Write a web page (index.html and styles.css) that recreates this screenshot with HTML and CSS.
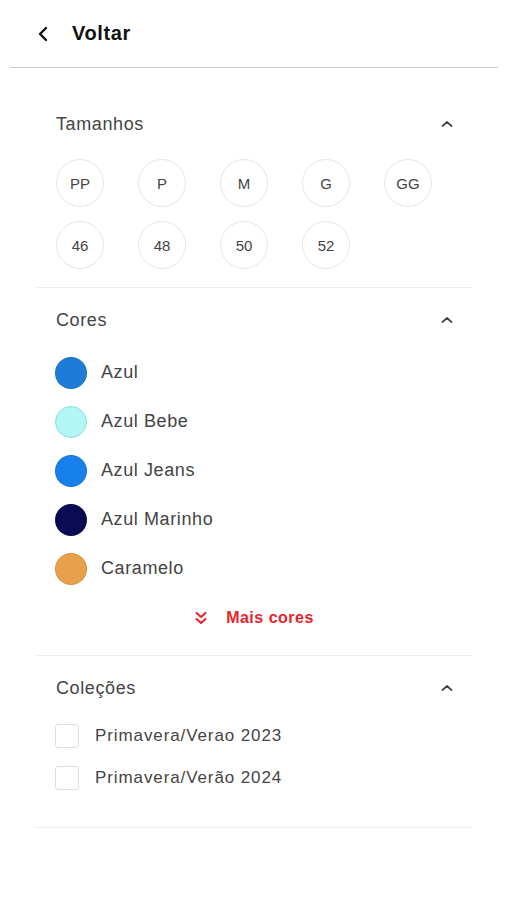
FILE: index.html
```html
<!DOCTYPE html>
<html lang="pt">
<head>
<meta charset="utf-8">
<title>Filtros</title>
<link rel="stylesheet" href="styles.css">
</head>
<body>
<header class="topbar">
  <svg class="back" width="12" height="16" viewBox="0 0 12 16"><path d="M9 2 L3 8 L9 14" fill="none" stroke="#111" stroke-width="2.4" stroke-linecap="round" stroke-linejoin="round"/></svg>
  <span class="topbar-title">Voltar</span>
</header>
<main class="filters">
  <section class="group">
    <div class="group-head">
      <span class="group-title">Tamanhos</span>
      <svg class="chev" width="14" height="8" viewBox="0 0 14 8"><path d="M2.5 6 L7 2 L11.5 6" fill="none" stroke="#444" stroke-width="1.7" stroke-linecap="round" stroke-linejoin="round"/></svg>
    </div>
    <div class="sizes">
      <span class="size">PP</span>
      <span class="size">P</span>
      <span class="size">M</span>
      <span class="size">G</span>
      <span class="size">GG</span>
      <span class="size">46</span>
      <span class="size">48</span>
      <span class="size">50</span>
      <span class="size">52</span>
    </div>
  </section>
  <section class="group">
    <div class="group-head">
      <span class="group-title">Cores</span>
      <svg class="chev" width="14" height="8" viewBox="0 0 14 8"><path d="M2.5 6 L7 2 L11.5 6" fill="none" stroke="#444" stroke-width="1.7" stroke-linecap="round" stroke-linejoin="round"/></svg>
    </div>
    <ul class="colors">
      <li class="color"><span class="swatch" style="background:#1f7bd8"></span>Azul</li>
      <li class="color"><span class="swatch light" style="background:#b2f6f6"></span>Azul Bebe</li>
      <li class="color"><span class="swatch" style="background:#1880ea"></span>Azul Jeans</li>
      <li class="color"><span class="swatch" style="background:#0a0b52"></span>Azul Marinho</li>
      <li class="color"><span class="swatch" style="background:#e9a04a"></span>Caramelo</li>
    </ul>
    <div class="more">
      <svg class="more-icon" width="14" height="16" viewBox="0 0 14 16"><path d="M2.5 3 L7 7 L11.5 3 M2.5 9 L7 13 L11.5 9" fill="none" stroke="#e8232c" stroke-width="2" stroke-linecap="round" stroke-linejoin="round"/></svg>
      <span class="more-text">Mais cores</span>
    </div>
  </section>
  <section class="group">
    <div class="group-head">
      <span class="group-title">Coleções</span>
      <svg class="chev" width="14" height="8" viewBox="0 0 14 8"><path d="M2.5 6 L7 2 L11.5 6" fill="none" stroke="#444" stroke-width="1.7" stroke-linecap="round" stroke-linejoin="round"/></svg>
    </div>
    <ul class="checks">
      <li class="check"><span class="box"></span>Primavera/Verao 2023</li>
      <li class="check"><span class="box"></span>Primavera/Verão 2024</li>
    </ul>
  </section>
</main>
</body>
</html>
```
FILE: styles.css
```css
* { box-sizing: border-box; }
html, body { margin: 0; padding: 0; background: #fff; }
body {
  font-family: "Liberation Sans", Arial, sans-serif;
  color: #444;
  width: 506px;
}
.topbar {
  height: 68px;
  margin: 0 8px 0 10px;
  border-bottom: 1.5px solid #c9c9c9;
  display: flex;
  align-items: center;
  padding-left: 27px;
}
.back { display: block; margin-right: 23px; }
.topbar-title {
  font-size: 20px;
  font-weight: 700;
  color: #111;
  letter-spacing: 0.6px;
}
.filters {
  padding: 24px 34px 0 36px;
}
.group {
  padding: 8px 18px 0 20px;
  border-bottom: 1px solid #ececec;
}
.group-head {
  height: 48px;
  display: flex;
  align-items: center;
  justify-content: space-between;
}
.group-title {
  font-size: 18px;
  color: #444;
  letter-spacing: 0.6px;
}
.chev { display: block; }
.sizes {
  margin-top: 11px;
  padding-bottom: 18px;
  display: grid;
  grid-template-columns: repeat(5, 48px);
  column-gap: 34px;
  row-gap: 14px;
}
.size {
  width: 48px;
  height: 48px;
  border-radius: 50%;
  border: 1px solid #e6e6e6;
  display: flex;
  align-items: center;
  justify-content: center;
  font-size: 15px;
  color: #444;
}
.colors, .checks {
  list-style: none;
  margin: 0;
  padding: 0;
}
.colors { margin-top: 4px; }
.color {
  height: 49px;
  display: flex;
  align-items: center;
  font-size: 18px;
  color: #444;
  letter-spacing: 0.6px;
}
.swatch {
  width: 32px;
  height: 32px;
  border-radius: 50%;
  margin-left: -1px;
  margin-right: 14px;
  border: 1px solid rgba(0,0,0,0.08);
}
.swatch.light { border-color: #8fe0e0; }
.more {
  margin-top: 13px;
  height: 24px;
  display: flex;
  align-items: center;
  justify-content: center;
  margin-bottom: 25px;
}
.more-icon { display: block; margin-right: 18px; margin-left: -2px; }
.more-text {
  font-size: 16px;
  font-weight: 700;
  color: #e8232c;
  letter-spacing: 0.5px;
}
.checks { margin-top: 3px; padding-bottom: 28px; }
.check {
  height: 42px;
  display: flex;
  align-items: center;
  font-size: 17px;
  color: #444;
  letter-spacing: 0.9px;
}
.box {
  width: 24px;
  height: 24px;
  border: 1px solid #dedede;
  border-radius: 3px;
  margin-left: -1px;
  margin-right: 16px;
}
```
